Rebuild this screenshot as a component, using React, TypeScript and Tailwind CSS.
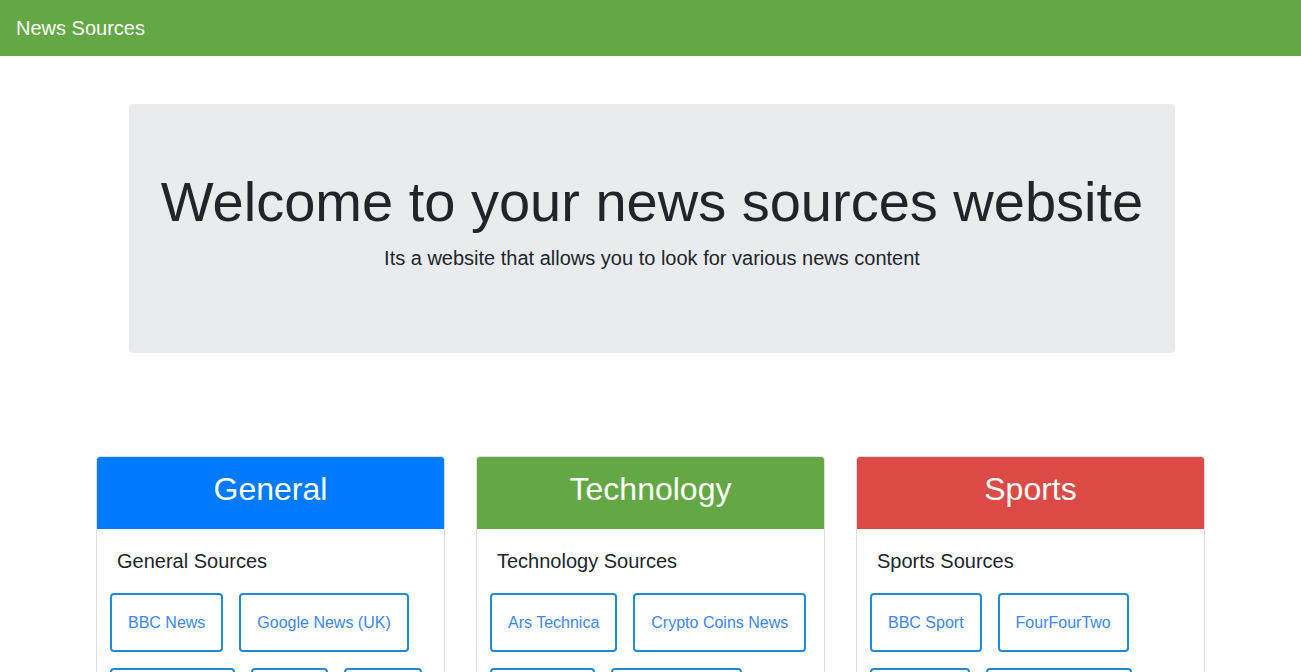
const categories = [
  {
    title: "General",
    header: "bg-[#007bff]",
    sources: ["BBC News", "Google News (UK)", "Independent", "Metro", "Mirror"],
  },
  {
    title: "Technology",
    header: "bg-[#63a845]",
    sources: ["Ars Technica", "Crypto Coins News", "Engadget", "Hacker News"],
  },
  {
    title: "Sports",
    header: "bg-[#db4a45]",
    sources: ["BBC Sport", "FourFourTwo", "Talksport", "The Sport Bible"],
  },
];

function CategoryCard({ title, header, sources }: { title: string; header: string; sources: string[] }) {
  return (
    <div className="w-[349px] overflow-hidden rounded border border-black/[0.125] bg-white">
      <div className={`${header} flex h-[72px] items-center justify-center pb-[8px] text-[32px] text-white`}>
        {title}
      </div>
      <div className="p-5">
        <h5 className="mb-5 text-[20px] leading-6 text-[#212529]">{title} Sources</h5>
        <div className="-ml-[7px] -mr-2 flex flex-wrap gap-x-[16px] gap-y-[16px]">
          {sources.map((s) => (
            <button
              key={s}
              className="h-[59px] rounded border-2 border-[#2289d4] px-[16px] text-[16px] text-[#3b86f5]"
            >
              {s}
            </button>
          ))}
        </div>
      </div>
    </div>
  );
}

export default function App() {
  return (
    <div className="min-h-screen bg-white font-['Liberation_Sans',Arial,sans-serif] text-[#212529]">
      {/* navbar */}
      <nav className="flex h-14 items-center bg-[#63a845] px-4">
        <span className="text-[20px] text-white">News Sources</span>
      </nav>

      {/* jumbotron */}
      <div className="flex justify-center pl-[3px] pt-12">
        <div className="w-[1046px] rounded bg-[#e9ecef] px-4 pb-16 pt-16 text-center">
          <h1 className="mb-2 whitespace-nowrap text-[56px] font-light leading-[1.2]">
            Welcome to your news sources website
          </h1>
          <p className="mb-4 text-[20px] leading-[30px]">Its a website that allows you to look for various news content</p>
        </div>
      </div>

      {/* categories */}
      <div className="mt-[103px] flex justify-center gap-[31px]">
        {categories.map((c) => (
          <CategoryCard key={c.title} {...c} />
        ))}
      </div>
    </div>
  );
}
